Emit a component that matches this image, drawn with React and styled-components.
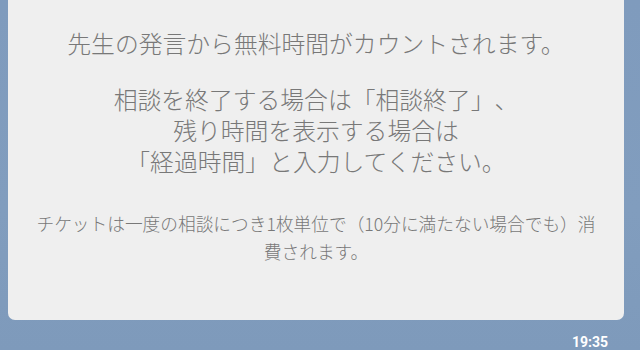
import React from 'react';
import styled, { createGlobalStyle } from 'styled-components';

const GlobalStyle = createGlobalStyle`
  html, body {
    margin: 0;
    padding: 0;
    height: 100%;
    overflow: hidden;
  }
  body {
    background: linear-gradient(180deg, #7f9bbd 0%, #819dbe 60%, #7e9abb 100%);
    font-family: "Noto Sans CJK JP", "Noto Sans", sans-serif;
  }
`;

const Screen = styled.div`
  width: 640px;
  height: 350px;
  display: flex;
  flex-direction: column;
  box-sizing: border-box;
`;

const Bubble = styled.div`
  margin: 0 16px 0 8px;
  height: 320px;
  box-sizing: border-box;
  background: #efefef;
  border-radius: 0 0 7px 7px;
  padding: 27px 16px 0;
  color: #787878;
  text-align: center;
  text-spacing-trim: space-all;
`;

const Message = styled.p`
  margin: 0;
  font-weight: 300;
  font-size: ${p => (p.small ? '17.7px' : '23.8px')};
  line-height: ${p => (p.small ? '28px' : '31px')};
  margin-top: ${p => p.gap || 0}px;
  white-space: nowrap;
`;

const Footer = styled.div`
  display: flex;
  justify-content: flex-end;
  padding: 14px 32px 0 0;
`;

const Time = styled.span`
  font-family: Roboto, "Liberation Sans", sans-serif;
  font-weight: 700;
  font-size: 14px;
  line-height: 16px;
  color: #ffffff;
`;

const App = () => (
  <>
    <GlobalStyle />
    <Screen>
      <Bubble>
        <Message>先生の発言から無料時間がカウントされます。</Message>
        <Message gap={25}>
          相談を終了する場合は「相談終了」、<br />
          残り時間を表示する場合は<br />
          「経過時間」と入力してください。
        </Message>
        <Message small gap={33}>
          チケットは一度の相談につき1枚単位で（10分に満たない場合でも）消<br />
          費されます。
        </Message>
      </Bubble>
      <Footer>
        <Time>19:35</Time>
      </Footer>
    </Screen>
  </>
);

export default App;
